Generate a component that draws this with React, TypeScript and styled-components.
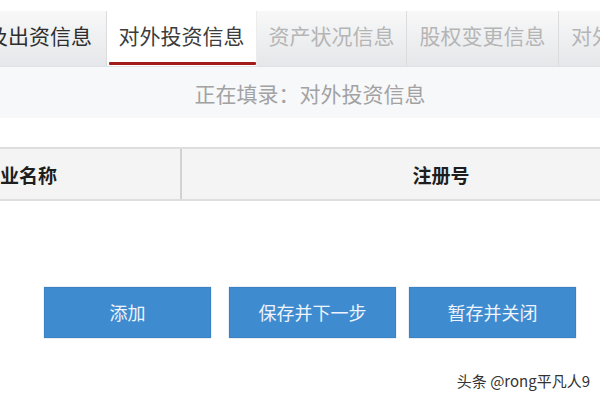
import React from 'react'
import styled, { createGlobalStyle } from 'styled-components'

const GlobalStyle = createGlobalStyle`
  html, body {
    margin: 0;
    padding: 0;
    background: #ffffff;
  }
  body {
    font-family: "Noto Sans CJK SC", "Liberation Sans", sans-serif;
  }
`

const Page = styled.div`
  width: 600px;
  height: 400px;
  overflow: hidden;
  background: #fff;
  display: flex;
  flex-direction: column;
`

const TabBar = styled.div`
  margin-top: 11px;
  height: 56px;
  display: flex;
  background: linear-gradient(#f8f8f8, #e5e7ea);
  border-bottom: 1px solid #dfe2e6;
  box-sizing: border-box;
  margin-left: -67px;
  width: 900px;
`

const Tab = styled.div<{ $active?: boolean; $dim?: boolean; $w: number }>`
  position: relative;
  width: ${(p) => p.$w}px;
  flex: none;
  display: flex;
  align-items: center;
  justify-content: ${(p) => (p.$w > 160 ? 'flex-start' : 'center')};
  padding-left: ${(p) => (p.$w > 160 ? '12px' : '0')};
  box-sizing: border-box;
  white-space: nowrap;
  font-size: 21px;
  color: ${(p) => (p.$active ? '#3c3c3c' : p.$dim ? '#b5b5b5' : '#2e2e2e')};
  background: ${(p) => (p.$active ? '#ffffff' : 'transparent')};
  border-right: 1px solid ${(p) => (p.$active ? '#ececec' : '#dcdcdc')};
  padding-bottom: 7px;

  &::after {
    content: '';
    display: ${(p) => (p.$active ? 'block' : 'none')};
    position: absolute;
    left: 2px;
    right: 0;
    bottom: 1px;
    height: 3px;
    background: #a31c1c;
    border-radius: 1px;
  }
`

const StatusBand = styled.div`
  height: 51px;
  background: #f7f8fa;
  display: flex;
  align-items: center;
  justify-content: center;
  padding-left: 20px;
  font-size: 21px;
  color: #a2a2a2;
`

const Table = styled.div`
  margin-top: 29px;
  margin-left: -30px;
  width: 730px;
  display: grid;
  grid-template-columns: 210px 520px;
  background: #f4f4f4;
  border-top: 2px solid #dedede;
  border-bottom: 2px solid #dedede;
  height: 54px;
  box-sizing: border-box;
`

const HeadCell = styled.div<{ $center?: boolean }>`
  display: flex;
  align-items: center;
  justify-content: ${(p) => (p.$center ? 'center' : 'flex-start')};
  padding-left: ${(p) => (p.$center ? '0' : '11px')};
  font-size: 19px;
  font-weight: 700;
  color: #1e1e1e;
  box-sizing: border-box;
  border-left: ${(p) => (p.$center ? '2px solid #d2d2d2' : 'none')};
`

const Actions = styled.div`
  margin-top: 86px;
  padding-left: 44px;
  display: flex;
`

const Button = styled.button<{ $gap?: number }>`
  width: 167px;
  height: 51px;
  margin-left: ${(p) => p.$gap ?? 0}px;
  background: #3f8bd0;
  border: 1px solid #3a82c6;
  box-shadow: 0 0 1px rgba(40, 90, 150, 0.5);
  color: #eef4fb;
  font-family: "Noto Sans CJK SC", "Liberation Sans", sans-serif;
  font-size: 18px;
  padding: 0 0 2px;
  cursor: pointer;
`

const Watermark = styled.div`
  margin-top: 32px;
  align-self: flex-end;
  margin-right: 10px;
  font-size: 15px;
  color: #333333;
  text-shadow: 0 0 2px #fff;
`

export default function App() {
  return (
    <>
      <GlobalStyle />
      <Page>
        <TabBar>
          <Tab $w={174}>股东及出资信息</Tab>
          <Tab $w={150} $active>
            对外投资信息
          </Tab>
          <Tab $w={150} $dim>
            资产状况信息
          </Tab>
          <Tab $w={152} $dim>
            股权变更信息
          </Tab>
          <Tab $w={232} $dim>
            对外提供保证担保信息
          </Tab>
        </TabBar>
        <StatusBand>正在填录：对外投资信息</StatusBand>
        <Table>
          <HeadCell>企业名称</HeadCell>
          <HeadCell $center>注册号</HeadCell>
        </Table>
        <Actions>
          <Button>添加</Button>
          <Button $gap={18}>保存并下一步</Button>
          <Button $gap={13}>暂存并关闭</Button>
        </Actions>
        <Watermark>头条 @rong平凡人9</Watermark>
      </Page>
    </>
  )
}
